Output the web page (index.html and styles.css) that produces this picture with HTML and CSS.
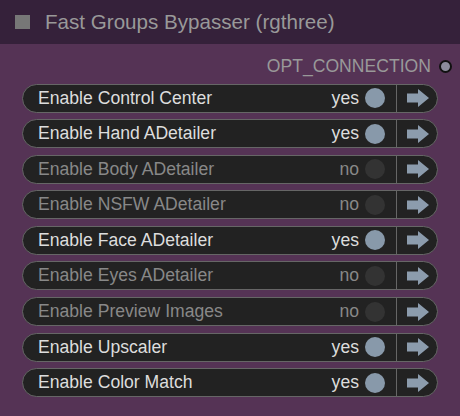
FILE: index.html
```html
<!DOCTYPE html>
<html>
<head>
<meta charset="utf-8">
<link rel="stylesheet" href="styles.css">
</head>
<body>
<div class="node">
  <div class="title">
    <span class="title-box"></span>
    <span class="title-text">Fast Groups Bypasser (rgthree)</span>
  </div>
  <div class="body">
    <div class="output">
      <span class="output-label">OPT_CONNECTION</span>
      <span class="output-dot"></span>
    </div>
    <div class="rows">
      <div class="row on"><div class="main"><span class="label">Enable Control Center</span><span class="state">yes</span><span class="toggle"></span></div><div class="go"><svg width="22" height="18" viewBox="0 0 22 18"><path d="M0 4.5H11V0L22 9L11 18V13.5H0Z" fill="#8c9cad"/></svg></div></div>
      <div class="row on"><div class="main"><span class="label">Enable Hand ADetailer</span><span class="state">yes</span><span class="toggle"></span></div><div class="go"><svg width="22" height="18" viewBox="0 0 22 18"><path d="M0 4.5H11V0L22 9L11 18V13.5H0Z" fill="#8c9cad"/></svg></div></div>
      <div class="row off"><div class="main"><span class="label">Enable Body ADetailer</span><span class="state">no</span><span class="toggle"></span></div><div class="go"><svg width="22" height="18" viewBox="0 0 22 18"><path d="M0 4.5H11V0L22 9L11 18V13.5H0Z" fill="#8c9cad"/></svg></div></div>
      <div class="row off"><div class="main"><span class="label">Enable NSFW ADetailer</span><span class="state">no</span><span class="toggle"></span></div><div class="go"><svg width="22" height="18" viewBox="0 0 22 18"><path d="M0 4.5H11V0L22 9L11 18V13.5H0Z" fill="#8c9cad"/></svg></div></div>
      <div class="row on"><div class="main"><span class="label">Enable Face ADetailer</span><span class="state">yes</span><span class="toggle"></span></div><div class="go"><svg width="22" height="18" viewBox="0 0 22 18"><path d="M0 4.5H11V0L22 9L11 18V13.5H0Z" fill="#8c9cad"/></svg></div></div>
      <div class="row off"><div class="main"><span class="label">Enable Eyes ADetailer</span><span class="state">no</span><span class="toggle"></span></div><div class="go"><svg width="22" height="18" viewBox="0 0 22 18"><path d="M0 4.5H11V0L22 9L11 18V13.5H0Z" fill="#8c9cad"/></svg></div></div>
      <div class="row off"><div class="main"><span class="label">Enable Preview Images</span><span class="state">no</span><span class="toggle"></span></div><div class="go"><svg width="22" height="18" viewBox="0 0 22 18"><path d="M0 4.5H11V0L22 9L11 18V13.5H0Z" fill="#8c9cad"/></svg></div></div>
      <div class="row on"><div class="main"><span class="label">Enable Upscaler</span><span class="state">yes</span><span class="toggle"></span></div><div class="go"><svg width="22" height="18" viewBox="0 0 22 18"><path d="M0 4.5H11V0L22 9L11 18V13.5H0Z" fill="#8c9cad"/></svg></div></div>
      <div class="row on"><div class="main"><span class="label">Enable Color Match</span><span class="state">yes</span><span class="toggle"></span></div><div class="go"><svg width="22" height="18" viewBox="0 0 22 18"><path d="M0 4.5H11V0L22 9L11 18V13.5H0Z" fill="#8c9cad"/></svg></div></div>
    </div>
  </div>
</div>
</body>
</html>
```
FILE: styles.css
```css
html, body {
  margin: 0;
  padding: 0;
}
body {
  width: 460px;
  height: 416px;
  overflow: hidden;
  background: #553355;
  font-family: "Liberation Sans", Arial, sans-serif;
}
.node {
  display: flex;
  flex-direction: column;
  height: 416px;
}
.title {
  height: 44px;
  flex: none;
  background: #35213a;
  display: flex;
  align-items: center;
  box-sizing: border-box;
  padding-left: 15px;
}
.title-box {
  width: 15px;
  height: 14px;
  background: #777777;
  margin-right: 15px;
}
.title-text {
  color: #999999;
  font-size: 20.6px;
}
.body {
  flex: 1;
  background: #553355;
  padding-top: 12px;
}
.output {
  display: flex;
  justify-content: flex-end;
  align-items: center;
  height: 20px;
  padding-right: 8px;
}
.output-label {
  color: #999999;
  font-size: 17.6px;
  margin-right: 8px;
}
.output-dot {
  width: 9px;
  height: 9px;
  border-radius: 50%;
  background: #8c8c9c;
  border: 2px solid #111;
}
.rows {
  display: flex;
  flex-direction: column;
  gap: 6.6px;
  margin-top: 7.5px;
  padding-left: 22px;
  width: 416px;
}
.row {
  height: 29px;
  flex: none;
  box-sizing: border-box;
  border: 1px solid #666666;
  border-radius: 15px;
  background: #222222;
  display: flex;
  align-items: stretch;
}
.main {
  flex: 1;
  display: flex;
  align-items: center;
  padding-left: 15px;
  padding-right: 11px;
  border-right: 1px solid #666666;
}
.label {
  flex: 1;
  font-size: 17.6px;
  color: #dddddd;
}
.state {
  font-size: 17.6px;
  color: #dddddd;
  margin-right: 6px;
}
.toggle {
  width: 20px;
  height: 20px;
  border-radius: 50%;
  background: #8899aa;
}
.off .label, .off .state {
  color: #888888;
}
.off .toggle {
  background: #333333;
}
.go {
  width: 40px;
  display: flex;
  align-items: center;
  padding-left: 10px;
  box-sizing: border-box;
}
```
